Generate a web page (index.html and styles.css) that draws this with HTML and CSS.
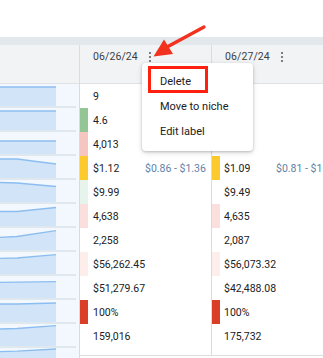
FILE: index.html
```html
<!DOCTYPE html>
<html>
<head>
<meta charset="utf-8">
<link rel="stylesheet" href="styles.css">
</head>
<body>
<div class="page">
  <div class="top-space"></div>
  <div class="band"></div>
  <div class="table">
    <div class="col col-chart">
      <div class="head"></div>
      <div class="spark"><svg width="56" height="22"><path class="fill" d="M0 3 L56 3 L56 22 L0 22 Z"/><path class="ln" d="M0 3 L56 3"/></svg><div class="base"></div></div>
      <div class="spark"><svg width="56" height="22"><path class="fill" d="M0 3 L56 3 L56 22 L0 22 Z"/><path class="ln" d="M0 3 L56 3"/></svg><div class="base"></div></div>
      <div class="spark"><svg width="56" height="22"><path class="fill" d="M0 9 L56 9 L56 22 L0 22 Z"/><path class="ln" d="M0 9 L56 9"/></svg><div class="base"></div></div>
      <div class="spark"><svg width="56" height="22"><path class="fill" d="M0 3 L17 3 L56 8 L56 22 L0 22 Z"/><path class="ln" d="M0 3 L17 3 L56 8"/></svg><div class="base"></div></div>
      <div class="spark"><svg width="56" height="22"><path class="fill" d="M0 2.5 L17 3 L56 6.5 L56 22 L0 22 Z"/><path class="ln" d="M0 2.5 L17 3 L56 6.5"/></svg><div class="base"></div></div>
      <div class="spark"><svg width="56" height="22"><path class="fill" d="M0 7.5 L17 7.5 L56 3.5 L56 22 L0 22 Z"/><path class="ln" d="M0 7.5 L17 7.5 L56 3.5"/></svg><div class="base"></div></div>
      <div class="spark"><svg width="56" height="22"><path class="fill" d="M0 9.3 L17 8.5 L56 2.7 L56 22 L0 22 Z"/><path class="ln" d="M0 9.3 L17 8.5 L56 2.7"/></svg><div class="base"></div></div>
      <div class="spark"><svg width="56" height="22"><path class="fill" d="M0 6.3 L17 6 L56 2.7 L56 22 L0 22 Z"/><path class="ln" d="M0 6.3 L17 6 L56 2.7"/></svg><div class="base"></div></div>
      <div class="spark"><svg width="56" height="22"><path class="fill" d="M0 6.3 L17 6.1 L56 5.7 L56 22 L0 22 Z"/><path class="ln" d="M0 6.3 L17 6.1 L56 5.7"/></svg><div class="base"></div></div>
      <div class="spark"><svg width="56" height="22"><path class="fill" d="M0 4 L17 4 L56 3 L56 22 L0 22 Z"/><path class="ln" d="M0 4 L17 4 L56 3"/></svg><div class="base"></div></div>
      <div class="spark"><svg width="56" height="22"><path class="fill" d="M0 5 L17 4.5 L56 1.7 L56 22 L0 22 Z"/><path class="ln" d="M0 5 L17 4.5 L56 1.7"/></svg><div class="base"></div></div>
      <div class="spark"><svg width="56" height="22"><path class="fill" d="M0 3.7 L17 3.2 L56 1 L56 22 L0 22 Z"/><path class="ln" d="M0 3.7 L17 3.2 L56 1"/></svg><div class="base"></div></div>
    </div>

    <div class="col col-day">
      <div class="head"><span class="date">06/26/24</span><svg class="kebab" width="4" height="12" viewBox="0 0 4 12"><circle cx="2" cy="2" r="1.1"/><circle cx="2" cy="6" r="1.1"/><circle cx="2" cy="10" r="1.1"/></svg></div>
      <div class="row"><span class="strip"></span><span class="val">9</span></div>
      <div class="row"><span class="strip s-green"></span><span class="val">4.6</span></div>
      <div class="row"><span class="strip s-pink"></span><span class="val">4,013</span></div>
      <div class="row"><span class="strip s-yellow"></span><span class="val">$1.12</span><span class="range">$0.86 - $1.36</span></div>
      <div class="row"><span class="strip s-lgreen"></span><span class="val">$9.99</span></div>
      <div class="row"><span class="strip s-lpink"></span><span class="val">4,638</span></div>
      <div class="row"><span class="strip"></span><span class="val">2,258</span></div>
      <div class="row"><span class="strip s-vpink"></span><span class="val">$56,262.45</span></div>
      <div class="row"><span class="strip"></span><span class="val">$51,279.67</span></div>
      <div class="row"><span class="strip s-red"></span><span class="val">100%</span></div>
      <div class="row"><span class="strip"></span><span class="val">159,016</span></div>
      <div class="end"></div>
    </div>

    <div class="col col-day col-last">
      <div class="head"><span class="date">06/27/24</span><svg class="kebab" width="4" height="12" viewBox="0 0 4 12"><circle cx="2" cy="2" r="1.1"/><circle cx="2" cy="6" r="1.1"/><circle cx="2" cy="10" r="1.1"/></svg></div>
      <div class="row"><span class="strip"></span></div>
      <div class="row"><span class="strip"></span></div>
      <div class="row"><span class="strip"></span></div>
      <div class="row"><span class="strip s-yellow"></span><span class="val">$1.09</span><span class="range">$0.81 - $1.35</span></div>
      <div class="row"><span class="strip"></span><span class="val">$9.49</span></div>
      <div class="row"><span class="strip s-lpink"></span><span class="val">4,635</span></div>
      <div class="row"><span class="strip"></span><span class="val">2,087</span></div>
      <div class="row"><span class="strip s-vpink"></span><span class="val">$56,073.32</span></div>
      <div class="row"><span class="strip"></span><span class="val">$42,488.08</span></div>
      <div class="row"><span class="strip s-red"></span><span class="val">100%</span></div>
      <div class="row"><span class="strip"></span><span class="val">175,732</span></div>
      <div class="end"></div>
    </div>
  </div>

  <div class="menu">
    <div class="item">Delete</div>
    <div class="item">Move to niche</div>
    <div class="item">Edit label</div>
    <div class="highlight"></div>
  </div>

  <svg class="arrow" width="323" height="80" viewBox="0 0 323 80">
    <line x1="204" y1="27" x2="167" y2="47" stroke="#f2311e" stroke-width="3.4" stroke-linecap="round"/>
    <polygon points="153.5,56.5 164,39.5 173,54" fill="#f2311e"/>
  </svg>
</div>
</body>
</html>
```

FILE: styles.css
```css
html, body {
  margin: 0;
  padding: 0;
  background: #ffffff;
}
body {
  width: 323px;
  height: 358px;
  overflow: hidden;
  font-family: Roboto, "Liberation Sans", Arial, sans-serif;
}
.page {
  position: relative;
  width: 323px;
  height: 358px;
  overflow: hidden;
}
.top-space {
  height: 37px;
}
.band {
  height: 8px;
  background: #e3e8ed;
}
.table {
  display: flex;
  align-items: flex-start;
}
.col {
  flex: none;
  border-right: 1px solid #d6dce2;
}
.col-chart {
  width: 79px;
  background: #f2f8fe;
}
.col-day {
  width: 131px;
}
.col-last {
  flex: 1;
  border-right: none;
}
.head {
  height: 39px;
  border-bottom: 1px solid #dfe3e7;
  background: #f1f3f5;
  display: flex;
  align-items: flex-start;
  box-sizing: border-box;
  padding-top: 5px;
}
.col-day .head {
  padding-left: 13px;
}
.date {
  font-size: 10.5px;
  line-height: 14px;
  color: #3c4043;
  letter-spacing: 0.1px;
}
.kebab {
  margin-left: 10px;
  margin-top: 1px;
  fill: #5f6368;
}
.spark {
  height: 24px;
  display: flex;
  flex-direction: column;
}
.spark svg {
  display: block;
}
.spark .fill {
  fill: #d2e5f8;
}
.spark .ln {
  fill: none;
  stroke: #8cbdf0;
  stroke-width: 1.3;
}
.base {
  width: 76px;
  height: 2px;
  background: #dfe7ef;
}
.row {
  height: 24px;
  display: flex;
  align-items: center;
  font-size: 10.5px;
  color: #202124;
}
.strip {
  width: 8px;
  align-self: stretch;
  flex: none;
}
.s-green { background: #93c595; }
.s-pink { background: #f5c6c0; }
.s-yellow { background: #fdca2e; }
.s-lgreen { background: #e7f4eb; }
.s-lpink { background: #fbdfdc; }
.s-vpink { background: #fdeeec; }
.s-red { background: #db3e26; }
.val {
  width: 52px;
  padding-left: 5px;
  flex: none;
  white-space: nowrap;
}
.col-last .val {
  padding-left: 4px;
}
.range {
  color: #6282a6;
  white-space: nowrap;
}
.end {
  height: 7px;
  border-bottom: 1px solid #dadce0;
}
.menu {
  position: absolute;
  left: 142px;
  top: 63px;
  width: 111px;
  height: 88px;
  box-sizing: border-box;
  padding-top: 6px;
  background: #ffffff;
  border-radius: 4px;
  box-shadow: 0 1px 3px rgba(0,0,0,0.22), 0 2px 6px rgba(0,0,0,0.10);
}
.item {
  height: 25px;
  line-height: 25px;
  padding-left: 18px;
  font-size: 11px;
  color: #202124;
}
.highlight {
  position: absolute;
  left: 6px;
  top: 3px;
  width: 60px;
  height: 27px;
  box-sizing: border-box;
  border: 3px solid #ff2010;
}
.arrow {
  position: absolute;
  left: 0;
  top: 0;
}
```
